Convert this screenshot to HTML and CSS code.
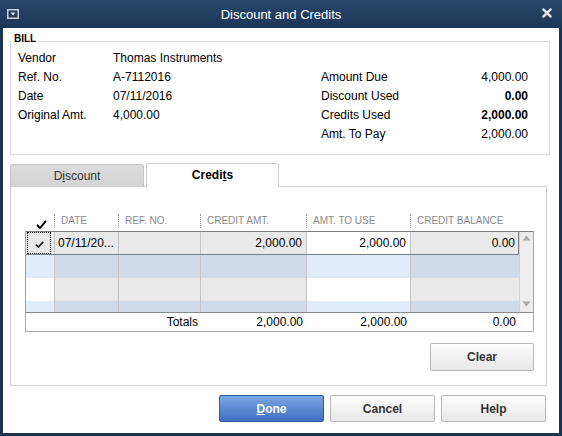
FILE: index.html
```html
<!DOCTYPE html>
<html>
<head>
<meta charset="utf-8">
<title>Discount and Credits</title>
<link rel="stylesheet" href="styles.css">
</head>
<body>
<div class="window">
  <div class="titlebar">
    <span class="sysicon">
      <svg width="12" height="10" viewBox="0 0 12 10"><rect x="0" y="0" width="12" height="10" fill="#c9d0d8"/><rect x="1.5" y="1.5" width="9" height="7" fill="#243d5c"/><polygon points="3.5,3.5 8.5,3.5 6,6.5" fill="#e4e9ee"/></svg>
    </span>
    <span class="title">Discount and Credits</span>
    <span class="close">
      <svg width="10" height="10" viewBox="0 0 10 10"><path d="M1.6 1.6 L8.4 8.4 M8.4 1.6 L1.6 8.4" stroke="#e4e6ea" stroke-width="2.4" stroke-linecap="square"/></svg>
    </span>
  </div>
  <div class="content">
    <div class="group">
      <span class="group-label">BILL</span>
      <div class="kv kv-left">
        <span>Vendor</span><span>Thomas Instruments</span>
        <span>Ref. No.</span><span>A-7112016</span>
        <span>Date</span><span>07/11/2016</span>
        <span>Original Amt.</span><span>4,000.00</span>
      </div>
      <div class="kv kv-right">
        <span>Amount Due</span><span class="num">4,000.00</span>
        <span>Discount Used</span><span class="num bold">0.00</span>
        <span>Credits Used</span><span class="num bold">2,000.00</span>
        <span>Amt. To Pay</span><span class="num">2,000.00</span>
      </div>
    </div>

    <div class="tabs">
      <div class="tab">D<u>i</u>scount</div>
      <div class="tab active">Credi<u>t</u>s</div>
    </div>
    <div class="panel">
      <div class="grid-head">
        <div class="h-check"><svg width="11" height="9" viewBox="0 0 11 9"><path d="M1 5 L4 8 L10 0.8" fill="none" stroke="#000" stroke-width="1.9"/></svg></div>
        <div class="h">DATE</div>
        <div class="h">REF. NO.</div>
        <div class="h">CREDIT AMT.</div>
        <div class="h">AMT. TO USE</div>
        <div class="h">CREDIT BALANCE</div>
      </div>
      <div class="grid">
        <div class="grid-body">
          <div class="rows">
            <div class="row sel">
              <div class="c c-chk"><span class="focus"><svg width="9" height="7" viewBox="0 0 9 7"><path d="M0.8 3.6 L3.4 6 L8.2 0.8" fill="none" stroke="#222" stroke-width="1.7"/></svg></span></div>
              <div class="c c-date">07/11/20...</div>
              <div class="c"></div>
              <div class="c num">2,000.00</div>
              <div class="c c-use num">2,000.00</div>
              <div class="c c-last num">0.00</div>
            </div>
            <div class="row alt">
              <div class="c c-chk"></div><div class="c"></div><div class="c"></div><div class="c"></div><div class="c c-use"></div><div class="c c-last"></div>
            </div>
            <div class="row plain">
              <div class="c c-chk"></div><div class="c"></div><div class="c"></div><div class="c"></div><div class="c c-use"></div><div class="c c-last"></div>
            </div>
            <div class="row alt">
              <div class="c c-chk"></div><div class="c"></div><div class="c"></div><div class="c"></div><div class="c c-use"></div><div class="c c-last"></div>
            </div>
          </div>
          <div class="scrollbar">
            <span class="sb-btn"><svg width="9" height="6" viewBox="0 0 9 6"><polygon points="0.5,5.5 8.5,5.5 4.5,0.5" fill="#a9a9a9"/></svg></span>
            <span class="sb-track"></span>
            <span class="sb-btn"><svg width="9" height="6" viewBox="0 0 9 6"><polygon points="0.5,0.5 8.5,0.5 4.5,5.5" fill="#a9a9a9"/></svg></span>
          </div>
        </div>
        <div class="totals">
          <div></div>
          <div></div>
          <div class="t-label">Totals</div>
          <div class="num">2,000.00</div>
          <div class="num">2,000.00</div>
          <div class="num t-last">0.00</div>
        </div>
      </div>
      <div class="panel-actions">
        <button class="btn">Clear</button>
      </div>
    </div>

    <div class="actions">
      <button class="btn primary"><u>D</u>one</button>
      <button class="btn">Cancel</button>
      <button class="btn">Help</button>
    </div>
  </div>
</div>
</body>
</html>
```

FILE: styles.css
```css
* { box-sizing: border-box; }
html, body { margin: 0; padding: 0; }
body {
  font-family: "Liberation Sans", Arial, sans-serif;
  font-size: 12px;
  color: #000;
  width: 562px;
  height: 436px;
  overflow: hidden;
  background: #fff;
}
.window {
  width: 562px;
  height: 436px;
  background: #1b3452;
  padding: 0 3px 3px;
  display: flex;
  flex-direction: column;
}
.titlebar {
  height: 28px;
  margin: 0 -3px;
  background: linear-gradient(#28476a, #1c3656);
  display: grid;
  grid-template-columns: 1fr auto 1fr;
  color: #fff;
}
.sysicon { padding: 9px 0 0 7px; display: flex; align-items: flex-start; }
.title { font-size: 13px; line-height: 16px; padding-top: 7px; white-space: nowrap; }
.close { display: flex; justify-content: flex-end; padding: 8px 10px 0 0; align-items: flex-start; }

.content {
  flex: 1;
  background: #fff;
  padding: 13px 0 0 7px;
}

.group {
  position: relative;
  width: 540px;
  height: 114px;
  border: 1px solid #d9d9d9;
  display: flex;
  padding: 7px 21px 0 7px;
}
.group-label {
  position: absolute;
  top: -9px;
  left: 1px;
  padding: 0 2px;
  background: #fff;
  font-size: 10px;
  font-weight: bold;
  line-height: 11px;
}
.kv { display: grid; line-height: 19px; align-content: start; white-space: nowrap; }
.kv-left { width: 303px; grid-template-columns: 95px auto; }
.kv-right { width: 207px; grid-template-columns: 1fr auto; margin-top: 19px; }
.num { text-align: right; }
.bold { font-weight: bold; }

.tabs {
  display: flex;
  align-items: flex-end;
  gap: 2px;
  height: 23px;
  margin-top: 8px;
  position: relative;
  z-index: 1;
}
.tab {
  width: 134px;
  height: 22px;
  border: 1px solid #c6c6c6;
  border-bottom: none;
  border-radius: 3px 3px 0 0;
  background: linear-gradient(#dcdcdc, #d4d4d4);
  display: flex;
  align-items: center;
  justify-content: center;
  color: #333;
  padding-top: 1px;
}
.tab.active {
  width: 133px;
  height: 24px;
  margin-bottom: -1px;
  background: #fff;
  border-color: #d0d0d0;
  color: #000;
  font-weight: bold;
  padding-top: 0;
  padding-bottom: 1px;
}

.panel {
  width: 537px;
  height: 200px;
  border: 1px solid #d0d0d0;
  padding: 27px 12px 0 14px;
  background: #fff;
}
.grid-head {
  display: grid;
  grid-template-columns: 29px 64px 82px 106px 104px 1fr;
  height: 14px;
  margin-bottom: 3px;
  font-size: 10px;
  line-height: 14px;
  color: #888;
}
.h-check { display: flex; justify-content: center; align-items: flex-end; padding-left: 3px; padding-top: 1px; }
.h-check svg { display: block; margin-bottom: -1px; }
.h {
  border-left: 1px dotted #999;
  padding-left: 6px;
  white-space: nowrap;
}

.grid { width: 509px; }
.grid-body {
  display: flex;
  height: 81px;
  border-top: 1px solid #7d7d7d;
  border-left: 1px solid #9c9c9c;
  border-right: 1px solid #a8a8a8;
}
.rows { width: 493px; overflow: hidden; }
.row {
  display: grid;
  grid-template-columns: 29px 64px 82px 106px 104px 108px;
  height: 23px;
}
.row.sel { border-bottom: 1px solid #7d7d7d; }
.c {
  border-right: 1px solid #c4c4c4;
  padding: 0 4px;
  line-height: 22px;
  white-space: nowrap;
  overflow: hidden;
}
.c-last { border-right: none; }
.row.sel .c-last { border-right: 1px solid #7d7d7d; padding-right: 3px; }
.c-date { padding-left: 3px; }
.c-chk { padding: 0 0 0 1px; display: flex; }
.focus {
  width: 24px;
  height: 22px;
  border: 1px dotted #000;
  display: flex;
  align-items: center;
  justify-content: center;
  padding-top: 3px;
}

.row.sel .c { background: #e9e9e9; }
.row.sel .c-use { background: #fff; }
.row.alt .c { background: #cfdbe8; }
.row.alt .c-chk, .row.alt .c-use { background: #e1ecfb; }
.row.plain .c { background: #e9e9e9; }
.row.plain .c-chk, .row.plain .c-use { background: #fff; }

.scrollbar {
  width: 14px;
  background: #ececec;
  border-left: 1px solid #d2d2d2;
  display: flex;
  flex-direction: column;
}
.sb-btn { height: 10px; display: flex; align-items: center; justify-content: center; }
.sb-btn:first-child { padding-top: 2px; }
.sb-btn:last-child { height: 13px; padding-bottom: 3px; }
.sb-track { flex: 1; background: #efefef; }

.totals {
  display: grid;
  grid-template-columns: 29px 64px 82px 106px 104px 1fr;
  height: 20px;
  border: 1px solid #a8a8a8;
  border-top-color: #8a8a8a;
  line-height: 18px;
}
.totals > div { padding-right: 4px; white-space: nowrap; }
.totals .t-label { text-align: right; padding-right: 3px; }
.totals .t-last { padding-right: 17px; }

.panel-actions {
  display: flex;
  justify-content: flex-end;
  margin-top: 11px;
}
.panel-actions .btn { width: 104px; height: 28px; }

.actions {
  display: flex;
  justify-content: flex-end;
  gap: 6px;
  margin-top: 9px;
  padding-right: 13px;
}
.btn {
  width: 105px;
  height: 27px;
  border: 1px solid #b7b7b7;
  border-radius: 2px;
  background: linear-gradient(#fdfdfd, #e8e8e8);
  font-family: "Liberation Sans", Arial, sans-serif;
  font-size: 12px;
  font-weight: bold;
  color: #333;
  padding: 0;
}
.btn.primary {
  background: linear-gradient(#7aa6e2, #3f70c5);
  border-color: #2f5a9e;
  color: #fff;
}
```
